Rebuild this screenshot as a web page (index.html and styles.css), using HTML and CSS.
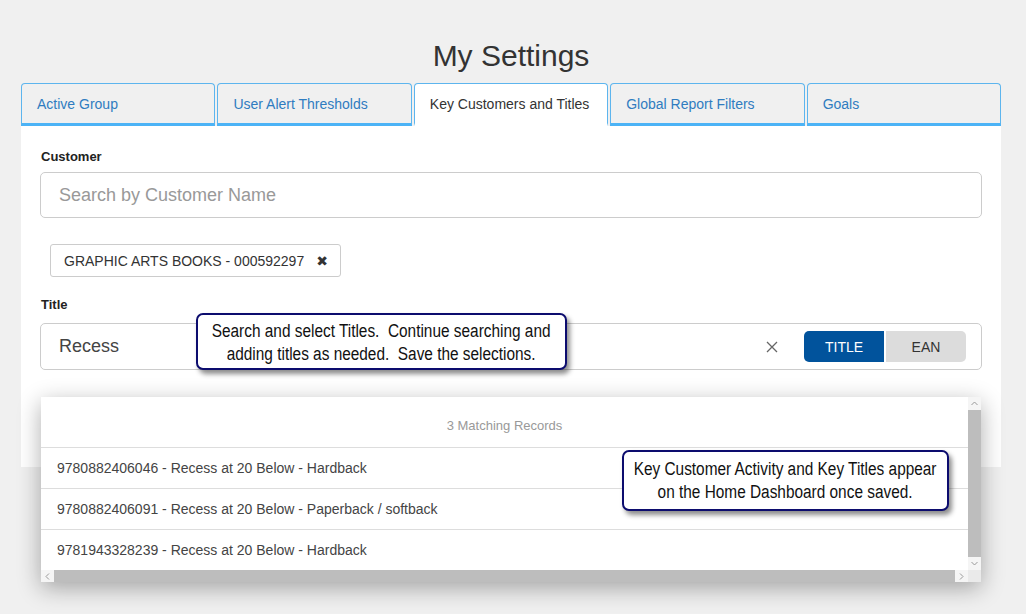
FILE: index.html
```html
<!DOCTYPE html>
<html lang="en">
<head>
  <meta charset="UTF-8">
  <title>My Settings</title>
  <link rel="stylesheet" href="styles.css">
</head>
<body>

  <div class="page">
    <h1 class="page-title">My Settings</h1>

    <div class="tabs">
      <div class="tab">Active Group</div>
      <div class="tab">User Alert Thresholds</div>
      <div class="tab active">Key Customers and Titles</div>
      <div class="tab">Global Report Filters</div>
      <div class="tab">Goals</div>
    </div>

    <div class="panel">
      <div class="field-label">Customer</div>
      <div class="search-box customer-box">
        <span class="placeholder">Search by Customer Name</span>
      </div>

      <div class="chips">
        <span class="chip">GRAPHIC ARTS BOOKS - 000592297 <span class="chip-x">&#10006;</span></span>
      </div>

      <div class="field-label title-label">Title</div>
      <div class="search-box title-box">
        <span class="value">Recess</span>
        <span class="clear">
          <svg width="12" height="12" viewBox="0 0 12 12"><path d="M1 1L11 11M11 1L1 11" stroke="#666" stroke-width="1.3" fill="none"/></svg>
        </span>
        <div class="toggle">
          <button class="toggle-btn on">TITLE</button>
          <button class="toggle-btn">EAN</button>
        </div>
      </div>

      <!-- dropdown with matches -->
      <div class="results">
        <div class="results-list">
          <div class="results-head">3 Matching Records</div>
          <div class="result-row">9780882406046 - Recess at 20 Below - Hardback</div>
          <div class="result-row">9780882406091 - Recess at 20 Below - Paperback / softback</div>
          <div class="result-row">9781943328239 - Recess at 20 Below - Hardback</div>
        </div>
        <div class="vscroll">
          <span class="arrow"><svg width="7" height="5" viewBox="0 0 7 5"><path d="M0.5 4L3.5 1L6.5 4" stroke="#999" fill="none"/></svg></span>
          <span class="thumb"></span>
          <span class="arrow"><svg width="7" height="5" viewBox="0 0 7 5"><path d="M0.5 1L3.5 4L6.5 1" stroke="#999" fill="none"/></svg></span>
        </div>
        <div class="hscroll">
          <span class="arrow"><svg width="5" height="7" viewBox="0 0 5 7"><path d="M4 0.5L1 3.5L4 6.5" stroke="#999" fill="none"/></svg></span>
          <span class="thumb"></span>
          <span class="arrow"><svg width="5" height="7" viewBox="0 0 5 7"><path d="M1 0.5L4 3.5L1 6.5" stroke="#999" fill="none"/></svg></span>
        </div>
        <div class="corner"></div>
      </div>
    </div>

    <div class="callout callout-search">
      <span class="callout-text">Search and select Titles.&nbsp; Continue searching and<br>adding titles as needed.&nbsp; Save the selections.</span>
    </div>
    <div class="callout callout-home">
      <span class="callout-text">Key Customer Activity and Key Titles appear<br>on the Home Dashboard once saved.</span>
    </div>
  </div>

</body>
</html>
```

FILE: styles.css
```css
body {
  margin: 0;
  background: #f0f0f0;
  font-family: "Liberation Sans", Arial, sans-serif;
  color: #333;
}
.page {
  position: relative;
  width: 980px;
  margin-left: 21px;
  height: 614px;
}
.page-title {
  margin: 0;
  padding-top: 38px;
  height: 36px;
  margin-bottom: 9px;
  font-size: 30px;
  line-height: 36px;
  font-weight: normal;
  text-align: center;
  color: #333;
}
.tabs {
  display: flex;
  gap: 2px;
}
.tab {
  flex: 1;
  height: 38px;
  padding-top: 1px;
  padding-left: 15px;
  border: 1px solid #5db5ee;
  border-bottom: 3px solid #4cb3f6;
  border-radius: 4px 4px 0 0;
  font-size: 14px;
  line-height: 39px;
  color: #2f7cc0;
}
.tab.active {
  background: #fff;
  color: #333;
  border-bottom: 3px solid #fff;
}
.panel {
  position: relative;
  background: #fff;
  padding: 22px 19px 97px;
}
.field-label {
  font-size: 13px;
  line-height: 18px;
  font-weight: bold;
  color: #222;
  margin-bottom: 6px;
  padding-left: 1px;
}
.title-label {
  margin-top: 19px;
  margin-bottom: 9px;
}
.search-box {
  display: flex;
  align-items: center;
  height: 44px;
  border: 1px solid #ccc;
  border-radius: 5px;
  padding: 0 15px 0 18px;
  font-size: 18px;
}
.placeholder {
  color: #999;
}
.title-box {
  height: 45px;
}
.value {
  flex: 1;
  color: #444;
}
.clear {
  display: flex;
  margin-right: 26px;
}
.toggle {
  display: flex;
  gap: 2px;
}
.toggle-btn {
  width: 80px;
  height: 31px;
  border: none;
  background: #dcdcdc;
  color: #333;
  font-family: "Liberation Sans", Arial, sans-serif;
  font-size: 14px;
  padding: 0;
  border-radius: 0 5px 5px 0;
}
.toggle-btn.on {
  background: #01539c;
  color: #fff;
  border-radius: 5px 0 0 5px;
}
.chips {
  margin-top: 26px;
  padding-left: 10px;
}
.chip {
  display: inline-flex;
  align-items: center;
  gap: 12px;
  height: 31px;
  padding: 0 12px 0 13px;
  border: 1px solid #ccc;
  border-radius: 3px;
  font-size: 14px;
  color: #333;
}
.chip-x {
  font-family: "DejaVu Sans", sans-serif;
  font-size: 14px;
  color: #333;
}
.results {
  position: absolute;
  top: 271px;
  left: 20px;
  width: 940px;
  height: 185px;
  display: grid;
  grid-template-columns: 1fr 13px;
  grid-template-rows: 1fr 12px;
  background: #fff;
  box-shadow: 0 6px 22px rgba(0, 0, 0, 0.32);
}
.results-head {
  height: 42px;
  padding-top: 8px;
  line-height: 42px;
  text-align: center;
  font-size: 13px;
  color: #999;
}
.result-row {
  height: 40px;
  line-height: 40px;
  border-top: 1px solid #ddd;
  padding-left: 16px;
  font-size: 14px;
  color: #444;
}
.vscroll {
  display: flex;
  flex-direction: column;
}
.hscroll {
  display: flex;
}
.arrow {
  flex: 0 0 13px;
  display: flex;
  align-items: center;
  justify-content: center;
  background: #f5f5f5;
}
.thumb {
  flex: 1;
  background: #bdbdbd;
}
.corner {
  background: #eaeaea;
}
.callout {
  position: absolute;
  box-sizing: border-box;
  display: flex;
  justify-content: center;
  background: #fff;
  border: 2px solid #0c0c6e;
  border-radius: 7px;
  box-shadow: 3px 4px 5px rgba(0, 0, 0, 0.45);
  font-size: 18px;
  line-height: 23px;
  color: #111;
  text-align: center;
  padding-top: 5px;
}
/* the callouts use a narrow face; squeeze the regular one */
.callout-text {
  display: inline-block;
  white-space: nowrap;
  transform: scaleX(0.855);
}
.callout-search {
  left: 175px;
  top: 313px;
  width: 371px;
  height: 57px;
}
.callout-home {
  left: 601px;
  top: 450px;
  width: 327px;
  height: 61px;
  padding-top: 6px;
}
```
